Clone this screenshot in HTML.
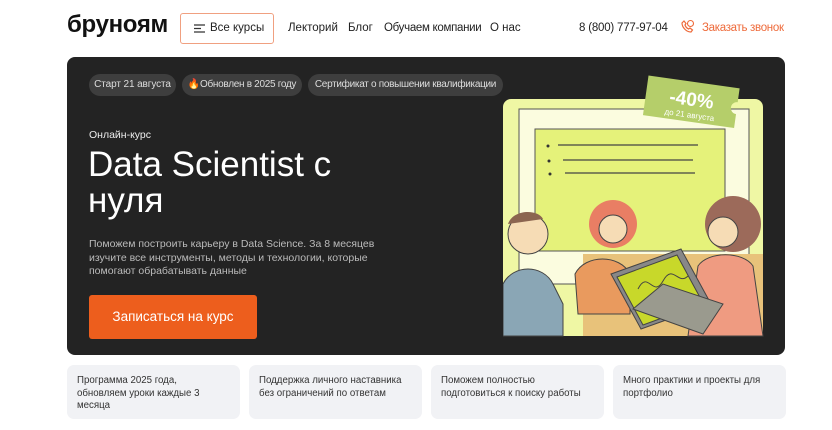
<!DOCTYPE html>
<html><head><meta charset="utf-8"><style>
*{margin:0;padding:0;box-sizing:border-box}
body{width:832px;height:430px;background:#fff;font-family:"Liberation Sans","DejaVu Sans",sans-serif;position:relative;overflow:hidden;color:#222}
.abs{position:absolute;white-space:nowrap}
.logo{left:67px;top:11px;font-size:24px;font-weight:bold;letter-spacing:-0.3px;color:#111}
.allc{left:180px;top:13px;width:94px;height:31px;border:1px solid #f0a080;border-radius:3px;font-size:11.5px;line-height:29px;padding-left:29px}
.nav{top:22px;font-size:11.5px;color:#222}
.card{left:67px;top:57px;width:718px;height:298px;background:#232323;border-radius:8px}
.tag{top:74px;height:22px;border-radius:11px;background:#3e3e3e;color:#ddd;font-size:10px;line-height:22px;text-align:center;letter-spacing:-0.1px}
.feat{top:365px;width:173px;height:54px;background:#f1f2f5;border-radius:7px;font-size:9.7px;line-height:12.5px;padding:10px 10px 0 10px;color:#333;white-space:normal}
</style></head><body>
<div class="abs logo">бруноям</div>
<div class="abs allc"><svg class="abs" style="left:13px;top:10px" width="11" height="9"><path d="M0 1h11M0 4.5h7M0 8h11" stroke="#333" stroke-width="1.3"/></svg>Все курсы</div>
<div class="abs nav" style="left:288px">Лекторий</div>
<div class="abs nav" style="left:348px">Блог</div>
<div class="abs nav" style="left:384px;letter-spacing:-0.3px">Обучаем компании</div>
<div class="abs nav" style="left:490px">О нас</div>
<div class="abs nav" style="left:579px;letter-spacing:-0.2px">8 (800) 777-97-04</div>
<svg class="abs" style="left:680px;top:19px" width="15" height="15"><path d="M2 4c0 4 4 9 9 9l1.5-2-2.5-2-1.5 1c-2-1-3-2.5-3.5-4l1-1.5L4 2z" fill="none" stroke="#ee6a3a" stroke-width="1.2"/><circle cx="10.5" cy="4.5" r="3" fill="none" stroke="#ee6a3a" stroke-width="1.1"/></svg>
<div class="abs nav" style="left:702px;color:#ee6a3a;letter-spacing:-0.3px">Заказать звонок</div>

<div class="abs card"></div>
<div class="abs tag" style="left:89px;width:87px">Старт 21 августа</div>
<div class="abs tag" style="left:182px;width:120px;letter-spacing:-0.3px">🔥Обновлен в 2025 году</div>
<div class="abs tag" style="left:308px;width:195px;letter-spacing:-0.3px">Сертификат о повышении квалификации</div>
<div class="abs" style="left:89px;top:129px;font-size:10.5px;color:#eee">Онлайн-курс</div>
<div class="abs" style="left:88px;top:147px;font-size:35px;line-height:36px;color:#fff;width:300px;white-space:normal">Data Scientist с нуля</div>
<div class="abs" style="left:89px;top:238px;font-size:10.5px;line-height:13.5px;color:#bbb;width:310px;white-space:normal">Поможем построить карьеру в Data Science. За 8 месяцев изучите все инструменты, методы и технологии, которые помогают обрабатывать данные</div>
<div class="abs" style="left:89px;top:295px;width:168px;height:44px;background:#ed5e1d;border-radius:3px;color:#fff;font-size:13.5px;line-height:44px;text-align:center">Записаться на курс</div>

<svg class="abs" style="left:503px;top:74px" width="262" height="264">
<rect x="0" y="25" width="260" height="237" rx="8" fill="#eff7a4"/>
<rect x="16" y="35" width="230" height="175" fill="#fbfcdf" stroke="#555"/>
<rect x="32" y="55" width="190" height="122" fill="#e5f27a" stroke="#555"/>
<path d="M55 71h140M60 86h130M62 99h130" stroke="#444" stroke-width="1.2"/>
<circle cx="45" cy="72" r="1.5" fill="#333"/><circle cx="46" cy="87" r="1.5" fill="#333"/><circle cx="47" cy="100" r="1.5" fill="#333"/>
<rect x="80" y="180" width="180" height="82" fill="#e8c27a"/>
<path d="M0 210c10-20 40-20 50 0l10 20v32H0z" fill="#8aa6b5" stroke="#444"/>
<circle cx="25" cy="160" r="20" fill="#f6dcb5" stroke="#444"/>
<path d="M5 150c5-15 30-15 35-5" fill="#8b6550"/>
<circle cx="110" cy="150" r="24" fill="#e97e64"/>
<circle cx="110" cy="155" r="14" fill="#f6dcb5" stroke="#444"/>
<path d="M72 200c10-20 45-20 55 0v40H75z" fill="#e99a5e" stroke="#444"/>
<circle cx="230" cy="150" r="28" fill="#9c6a5a"/>
<circle cx="220" cy="158" r="15" fill="#f6dcb5" stroke="#444"/>
<path d="M185 262l10-70c10-15 45-15 55 0l10 70z" fill="#ef9b81" stroke="#444"/>
<path d="M108 200l70-25 30 55-70 25z" fill="#888" stroke="#444"/>
<path d="M114 203l60-22 26 48-60 22z" fill="#c8d82a" stroke="#444"/>
<path d="M135 215c10-20 15 10 25-8s15 5 25-5" stroke="#444" fill="none"/>
<path d="M130 235l70 25 20-30-60-20z" fill="#9a9a8e" stroke="#444"/>
<g transform="rotate(8 190 30)"><path d="M142 8h92v14a6 6 0 0 0 0 12v14h-92z" fill="#b5ce6a"/>
<text x="188" y="32" text-anchor="middle" font-size="19" font-weight="bold" fill="#fff" font-family="Liberation Sans">-40%</text>
<text x="188" y="44" text-anchor="middle" font-size="8" fill="#fff" font-family="Liberation Sans">до 21 августа</text></g>
</svg>

<div class="abs feat" style="left:67px;padding-right:30px">Программа 2025 года, обновляем уроки каждые 3 месяца</div>
<div class="abs feat" style="left:249px">Поддержка личного наставника без ограничений по ответам</div>
<div class="abs feat" style="left:431px">Поможем полностью подготовиться к поиску работы</div>
<div class="abs feat" style="left:613px">Много практики и проекты для портфолио</div>
</body></html>
